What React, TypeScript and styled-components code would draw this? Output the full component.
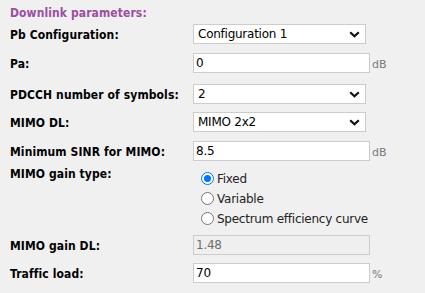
import React from "react";
import styled, { createGlobalStyle } from "styled-components";

const Global = createGlobalStyle`
  html, body { margin: 0; padding: 0; background: #f0f0f0; }
  body { font-family: "DejaVu Sans", Verdana, sans-serif; font-size: 12px; color: #000; }
`;

const Panel = styled.div`
  padding: 5px 10px 0 10px;
  width: 405px;
`;

const Title = styled.div`
  color: #9b4f9f;
  font-family: "DejaVu Sans Condensed", "DejaVu Sans", sans-serif;
  font-weight: bold;
  font-size: 12px;
  letter-spacing: 0.1px;
  height: 16px;
  line-height: 16px;
`;

const Row = styled.div<{ $top: number }>`
  display: grid;
  grid-template-columns: 183px auto auto;
  align-items: center;
  justify-content: start;
  margin-top: ${(p) => p.$top}px;
`;

const TopRow = styled(Row)`
  align-items: start;
`;

const Label = styled.div`
  font-family: "DejaVu Sans Condensed", "DejaVu Sans", sans-serif;
  font-weight: bold;
  font-size: 12px;
  letter-spacing: 0.1px;
  white-space: nowrap;
  padding-top: 1px;
`;

const SelectBox = styled.div`
  box-sizing: border-box;
  width: 173px;
  height: 20px;
  border: 1px solid #cccccc;
  background: #fff;
  display: flex;
  align-items: center;
  justify-content: space-between;
  padding: 0 5px 0 4px;
  font-size: 12px;
  letter-spacing: -0.25px;
`;

const Input = styled.div<{ $disabled?: boolean }>`
  box-sizing: border-box;
  width: 177px;
  height: 20px;
  border: 1px solid #cccccc;
  background: ${(p) => (p.$disabled ? "#efefef" : "#fff")};
  color: ${(p) => (p.$disabled ? "#6d6d6d" : "#000")};
  display: flex;
  align-items: center;
  padding: 0 2px;
  font-size: 12px;
  letter-spacing: -0.25px;
`;

const Unit = styled.span`
  color: #7a7a7a;
  font-size: 11px;
  margin-left: 2px;
  padding-top: 2px;
`;

const RadioGroup = styled.div`
  display: flex;
  flex-direction: column;
  gap: 7px;
  padding-left: 8px;
  padding-top: 6px;
`;

const RadioItem = styled.div`
  display: flex;
  align-items: center;
  gap: 3px;
  height: 13px;
  font-size: 12px;
  letter-spacing: -0.25px;
  color: #222;
`;

const RadioDot = styled.span<{ $on?: boolean }>`
  box-sizing: border-box;
  width: 13px;
  height: 13px;
  border-radius: 50%;
  border: ${(p) => (p.$on ? "1px solid #0075ff" : "1px solid #767676")};
  background: #fff;
  display: inline-flex;
  align-items: center;
  justify-content: center;
  &::after {
    content: "";
    display: ${(p) => (p.$on ? "block" : "none")};
    width: 7px;
    height: 7px;
    border-radius: 50%;
    background: #0075ff;
  }
`;

const Chevron = () => (
  <svg width="11" height="7" viewBox="0 0 11 7">
    <path d="M1.2 1.2 L5.5 5.3 L9.8 1.2" fill="none" stroke="#111" strokeWidth="2.2" />
  </svg>
);

const Select = ({ value }: { value: string }) => (
  <SelectBox>
    <span>{value}</span>
    <Chevron />
  </SelectBox>
);

export default function App() {
  return (
    <>
      <Global />
      <Panel>
        <Title>Downlink parameters:</Title>
        <Row $top={3}>
          <Label>Pb Configuration:</Label>
          <Select value="Configuration 1" />
        </Row>
        <Row $top={9}>
          <Label>Pa:</Label>
          <Input>0</Input>
          <Unit>dB</Unit>
        </Row>
        <Row $top={11}>
          <Label>PDCCH number of symbols:</Label>
          <Select value="2" />
        </Row>
        <Row $top={8}>
          <Label>MIMO DL:</Label>
          <Select value="MIMO 2x2" />
        </Row>
        <Row $top={9}>
          <Label>Minimum SINR for MIMO:</Label>
          <Input>8.5</Input>
          <Unit>dB</Unit>
        </Row>
        <TopRow $top={5}>
          <Label>MIMO gain type:</Label>
          <RadioGroup>
            <RadioItem>
              <RadioDot $on />
              Fixed
            </RadioItem>
            <RadioItem>
              <RadioDot />
              Variable
            </RadioItem>
            <RadioItem>
              <RadioDot />
              Spectrum efficiency curve
            </RadioItem>
          </RadioGroup>
        </TopRow>
        <Row $top={10}>
          <Label>MIMO gain DL:</Label>
          <Input $disabled>1.48</Input>
        </Row>
        <Row $top={8}>
          <Label>Traffic load:</Label>
          <Input>70</Input>
          <Unit>%</Unit>
        </Row>
      </Panel>
    </>
  );
}
